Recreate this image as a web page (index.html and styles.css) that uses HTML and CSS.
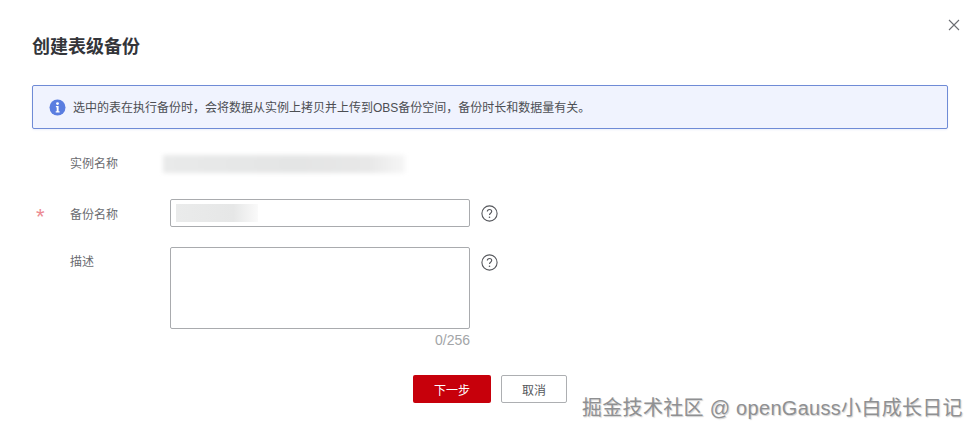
FILE: index.html
```html
<!DOCTYPE html>
<html lang="zh-CN">
<head>
<meta charset="utf-8">
<title>创建表级备份</title>
<link rel="stylesheet" href="styles.css">
</head>
<body>
<div class="dialog">
  <button class="close" aria-label="关闭">
    <svg width="12" height="12" viewBox="0 0 12 12"><path d="M1 1l10 10M11 1L1 11" fill="none" stroke="#6b6d72" stroke-width="1.1"/></svg>
  </button>
  <h1 class="title">创建表级备份</h1>
  <div class="alert">
    <svg class="alert-icon" width="17" height="17" viewBox="0 0 17 17"><circle cx="8.5" cy="8.5" r="8" fill="#5a7de0"/><circle cx="8.5" cy="4.6" r="1.4" fill="#fff"/><path d="M6.9 7h2.7v5.2h1v1.2H6.7v-1.2h1V8.2h-.8z" fill="#fff"/></svg>
    <span class="alert-text">选中的表在执行备份时，会将数据从实例上拷贝并上传到OBS备份空间，备份时长和数据量有关。</span>
  </div>
  <div class="form">
    <div class="row row-name">
      <span class="star"></span>
      <label class="label label-name">实例名称</label>
      <div class="masked masked-name"></div>
    </div>
    <div class="row">
      <span class="star">*</span>
      <label class="label">备份名称</label>
      <div class="input"><div class="masked masked-input"></div></div>
      <svg class="help" width="17" height="17" viewBox="0 0 17 17"><circle cx="8.5" cy="8.5" r="7.6" fill="none" stroke="#55575c" stroke-width="1.1"/><path d="M6.3 6.6c0-1.3 1-2.1 2.2-2.1s2.2.8 2.2 2c0 1.7-2.2 1.7-2.2 3.4" fill="none" stroke="#55575c" stroke-width="1.1"/><circle cx="8.5" cy="12.2" r=".8" fill="#55575c"/></svg>
    </div>
    <div class="row row-top">
      <span class="star"></span>
      <label class="label label-top">描述</label>
      <div class="field-col">
        <div class="textarea"></div>
        <div class="counter">0/256</div>
      </div>
      <svg class="help help-top" width="17" height="17" viewBox="0 0 17 17"><circle cx="8.5" cy="8.5" r="7.6" fill="none" stroke="#55575c" stroke-width="1.1"/><path d="M6.3 6.6c0-1.3 1-2.1 2.2-2.1s2.2.8 2.2 2c0 1.7-2.2 1.7-2.2 3.4" fill="none" stroke="#55575c" stroke-width="1.1"/><circle cx="8.5" cy="12.2" r=".8" fill="#55575c"/></svg>
    </div>
  </div>
  <div class="actions">
    <button class="btn btn-primary">下一步</button>
    <button class="btn btn-default">取消</button>
  </div>
  <div class="watermark">掘金技术社区 @ openGauss小白成长日记</div>
</div>
</body>
</html>
```
FILE: styles.css
```css
html, body {
  margin: 0;
  padding: 0;
  background: #fff;
}
body {
  width: 978px;
  height: 435px;
  overflow: hidden;
  font-family: "Liberation Sans", "Noto Sans CJK SC", sans-serif;
  color: #55575c;
}
.dialog {
  position: relative;
  box-sizing: border-box;
  width: 978px;
  height: 435px;
  padding: 33px 30px 0 32px;
}
.close {
  position: absolute;
  top: 19px;
  right: 18px;
  width: 12px;
  height: 12px;
  padding: 0;
  border: 0;
  background: none;
  line-height: 0;
}
.title {
  margin: 0;
  font-size: 18px;
  line-height: 28px;
  font-weight: 700;
  color: #33353a;
}
.alert {
  box-sizing: border-box;
  display: flex;
  align-items: center;
  gap: 7px;
  height: 44px;
  margin-top: 24px;
  padding-left: 16px;
  border: 1px solid #6f8bd6;
  border-radius: 2px;
  background: #f0f3fe;
  font-size: 12px;
  color: #4c4e53;
  box-shadow: 0 1px 2px rgba(90, 120, 210, .12);
}
.alert-icon {
  flex: none;
}
.alert-text {
  margin-bottom: 1px;
}
.form {
  display: flex;
  flex-direction: column;
  gap: 20px;
  margin-top: 21px;
}
.row {
  display: flex;
  align-items: center;
  min-height: 28px;
}
.row-name {
  margin-bottom: 1px;
}
.row-top {
  align-items: flex-start;
}
.star {
  flex: none;
  width: 38px;
  padding-left: 4px;
  box-sizing: border-box;
  font-size: 22px;
  line-height: 36px;
  height: 28px;
  color: #ec8a92;
}
.label {
  flex: none;
  width: 100px;
  font-size: 12px;
  color: #696b70;
}
.label-name {
  margin-bottom: 3px;
}
.label-top {
  line-height: 30px;
}
.masked {
  background: linear-gradient(90deg, #e9eaea 0%, #e4e5e5 55%, #e8e8e8 85%, #f6f6f6 100%);
}
.masked-name {
  width: 242px;
  height: 18px;
  margin-left: -7px;
  filter: blur(2px);
}
.input {
  box-sizing: border-box;
  display: flex;
  align-items: center;
  width: 300px;
  height: 28px;
  padding-left: 5px;
  border: 1px solid #a9abae;
  border-radius: 2px;
}
.masked-input {
  width: 82px;
  height: 18px;
  background: linear-gradient(90deg, #eaebeb 0%, #e6e7e7 70%, #fafafa 100%);
}
.help {
  flex: none;
  margin-left: 11px;
}
.help-top {
  margin-top: 7px;
}
.field-col {
  display: flex;
  flex-direction: column;
  width: 300px;
}
.textarea {
  box-sizing: border-box;
  height: 82px;
  border: 1px solid #a9abae;
  border-radius: 2px;
}
.counter {
  margin-top: 2px;
  font-size: 14px;
  line-height: 18px;
  text-align: right;
  color: #a3a5a8;
}
.actions {
  display: flex;
  gap: 10px;
  margin-top: 26px;
  margin-left: 381px;
}
.btn {
  box-sizing: border-box;
  height: 28px;
  padding: 0;
  border-radius: 2px;
  font-family: inherit;
  font-size: 12px;
}
.btn-primary {
  width: 78px;
  border: 0;
  background: #c7000b;
  color: #fff;
}
.btn-default {
  width: 66px;
  border: 1px solid #adafb2;
  background: #fff;
  color: #55575c;
}
.watermark {
  position: absolute;
  left: 582px;
  top: 397px;
  font-size: 20px;
  line-height: 22px;
  letter-spacing: .3px;
  white-space: nowrap;
  color: #8f9092;
  text-shadow: 1px 1px 1px rgba(120, 120, 120, .35);
}
```
